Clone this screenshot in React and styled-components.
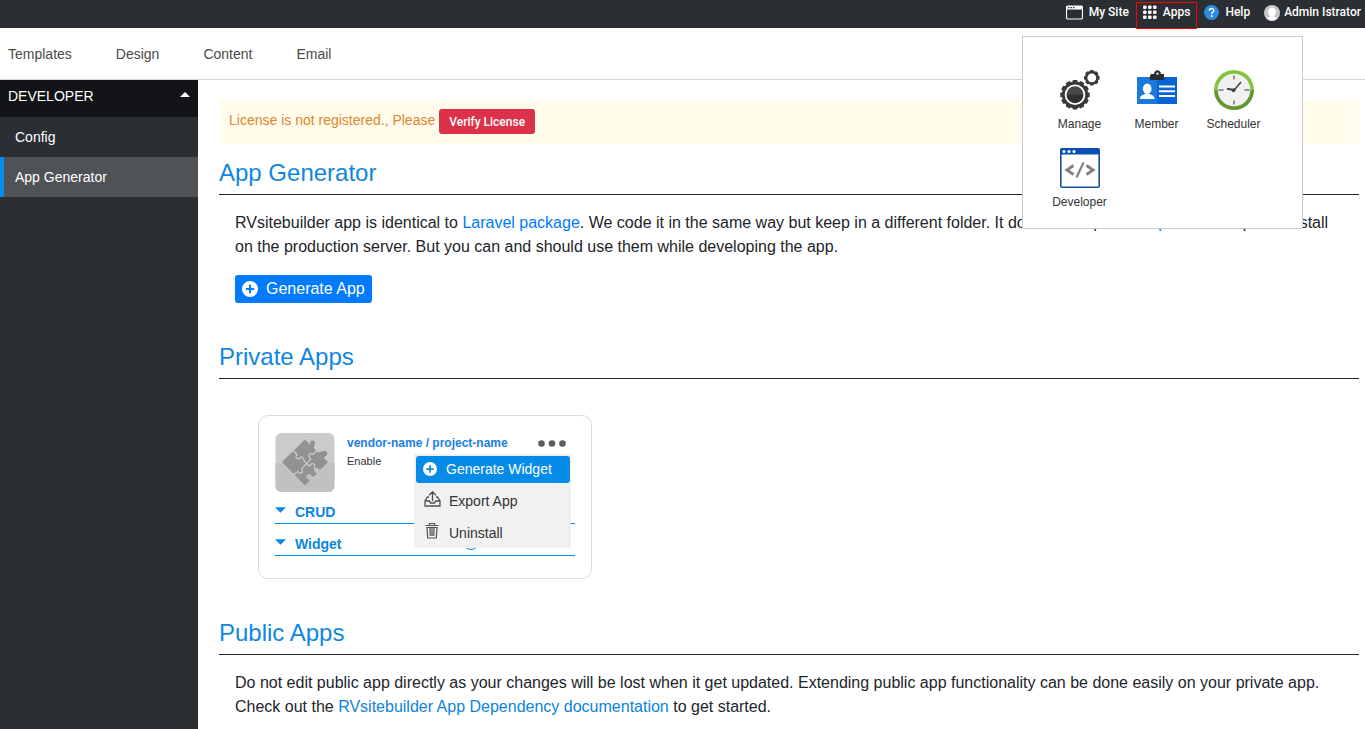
import React from "react";
import styled, { createGlobalStyle } from "styled-components";

const GlobalStyle = createGlobalStyle`
  *, *::before, *::after { box-sizing: border-box; }
  body {
    margin: 0;
    background: #fff;
    color: #212529;
    font: 16px/24px "Liberation Sans", Arial, sans-serif;
  }
  h2, p { margin: 0; padding: 0; }
  a { text-decoration: none; }
  button { font-family: inherit; cursor: pointer; border: 0; margin: 0; }
  svg { display: block; flex: none; }
`;

const Page = styled.div`
  display: flex;
  flex-direction: column;
  min-height: 100vh;
`;

const TopBar = styled.header`
  position: relative;
  display: flex;
  justify-content: flex-end;
  align-items: flex-start;
  height: 28px;
  background: #2b2e33;
`;

const TopItem = styled.button`
  display: flex;
  align-items: flex-start;
  gap: ${(p) => p.$gap || 6}px;
  height: 27px;
  margin-top: 2px;
  padding: 1px 6px;
  background: none;
  border: 1px solid ${(p) => (p.$active ? "#f00" : "transparent")};
  color: #fff;
  font: 500 12px/16px Roboto, sans-serif;
  white-space: nowrap;

  &:last-of-type { padding-right: 3px; }
`;

const AppsPanel = styled.div`
  position: absolute;
  z-index: 10;
  top: 36px;
  right: 62px;
  width: 281px;
  height: 193px;
  padding: 33px 18px 18px;
  background: #fff;
  border: 1px solid #ccc;
`;

const AppGrid = styled.div`
  display: grid;
  grid-template-columns: repeat(3, 77px);
  row-gap: 16px;
`;

const AppTile = styled.a`
  display: flex;
  flex-direction: column;
  align-items: center;
  gap: 6px;
  color: #333;
  font-size: 12px;
  line-height: 16px;
`;

const MainNav = styled.nav`
  display: flex;
  align-items: center;
  gap: 44px;
  height: 52px;
  padding: 0 8px;
  border-bottom: 1px solid #d5d5d5;
`;

const NavLink = styled.a`
  color: #4a4a4a;
  font-size: 14px;
  line-height: 20px;
`;

const Body = styled.div`
  display: flex;
  flex: 1;
`;

const Sidebar = styled.aside`
  flex: none;
  width: 198px;
  background: #2b2e33;
`;

const SideHeading = styled.button`
  display: flex;
  justify-content: space-between;
  align-items: flex-start;
  width: 100%;
  height: 37px;
  padding: 8px;
  background: #131417;
  color: #fff;
  font-size: 14px;
  line-height: 16px;
  svg { margin-top: 4px; }
`;

const SideLink = styled.a`
  display: block;
  padding: 10px 11px;
  border-left: 4px solid ${(p) => (p.$active ? "#078ee9" : "transparent")};
  background: ${(p) => (p.$active ? "#4f5256" : "transparent")};
  color: #fff;
  font-size: 14px;
  line-height: 20px;
`;

const Main = styled.main`
  flex: 1;
  min-width: 0;
  padding: 19px 6px 8px 21px;
`;

const Notice = styled.div`
  display: flex;
  align-items: flex-start;
  gap: 4px;
  padding: 10px;
  background: #fffceb;
  color: #e0862e;
  font-size: 14px;
  line-height: 22px;
`;

const VerifyButton = styled.button`
  height: 25px;
  padding: 0 10px;
  border-radius: 3px;
  background: #dc3149;
  color: #fff;
  font: 500 12px/16px Roboto, sans-serif;
`;

const SectionTitle = styled.h2`
  margin-top: ${(p) => (p.$first ? 15 : 40)}px;
  padding-bottom: 7px;
  border-bottom: 1px solid #212529;
  color: #0f87e0;
  font-size: 24px;
  font-weight: 400;
  line-height: 28px;
`;

const Paragraph = styled.p`
  padding: 16px 16px 0;
`;

const TextLink = styled.a`
  color: ${(p) => (p.$deep ? "#0c83dc" : "#007bff")};
`;

const GenerateButton = styled.button`
  display: flex;
  align-items: center;
  gap: 8px;
  height: 28px;
  margin: 16px 16px 0;
  padding: 0 7px;
  border-radius: 3px;
  background: #007bff;
  color: #fff;
  font-size: 16px;
  line-height: 24px;
`;

const AppCard = styled.article`
  position: relative;
  width: 334px;
  margin: 36px 39px 0;
  padding: 17px 16px 22px;
  border: 1px solid #dcdcdc;
  border-radius: 10px;
`;

const CardHead = styled.div`
  display: flex;
  gap: 12px;
`;

const CardInfo = styled.div`
  flex: 1;
  color: #333;
  font-size: 11px;
  line-height: 16px;
`;

const CardName = styled.a`
  display: block;
  color: #1a80e4;
  font-size: 12px;
  font-weight: 700;
  line-height: 20px;
`;

const MoreButton = styled.button`
  align-self: flex-start;
  padding: 7px 9px 0 0;
  background: none;
`;

const CardRow = styled.div`
  display: flex;
  align-items: flex-start;
  height: 32px;
  padding-top: 10px;
  border-bottom: 1px solid #0a87e2;
  color: #0a87e2;
  font-size: 14px;
  font-weight: 700;
  line-height: 20px;
`;

const RowToggle = styled.button`
  display: flex;
  align-items: center;
  gap: 9px;
  padding: 0;
  background: none;
  color: inherit;
  font: inherit;
  svg { margin-bottom: 4px; }
`;

const RowAction = styled.a`
  display: flex;
  align-items: center;
  gap: 5px;
  margin-left: auto;
  padding-right: 8px;
  color: #0a87e2;
  font-size: 11px;
  font-weight: 400;
  line-height: 16px;
`;

const CardMenu = styled.div`
  position: absolute;
  top: 38px;
  right: 20px;
  width: 157px;
  height: 94px;
  padding: 2px 1px 0 2px;
  background: #f1f1f1;
`;

const MenuItem = styled.button`
  display: flex;
  align-items: center;
  gap: ${(p) => (p.$primary ? 9 : 8)}px;
  width: 100%;
  height: ${(p) => (p.$primary ? 27 : 32)}px;
  margin-bottom: ${(p) => (p.$primary ? 2 : 0)}px;
  padding: 0 7px ${(p) => (p.$primary ? 1 : 0)}px 7px;
  border-radius: 3px;
  background: ${(p) => (p.$primary ? "#078be8" : "none")};
  color: ${(p) => (p.$primary ? "#fff" : "#333")};
  font-size: 14px;
  line-height: 20px;
  white-space: nowrap;
`;

function WindowIcon() {
  return (
    <svg width="17" height="16" viewBox="0 0 17 16" aria-hidden="true">
      <rect x="0.5" y="2" width="16" height="13" rx="1.5" fill="none" stroke="#fff" strokeWidth="1.2" />
      <path d="M0.5 3.500A1.500 1.500 0 0 1 2 2h13a1.500 1.500 0 0 1 1.500 1.500V5.500H.5z" fill="#fff" />
      <path d="M2 3.700h1.500M4.500 3.700H6M7 3.700h1.500" stroke="#2b2e33" strokeWidth="1.200" />
    </svg>
  );
}

function GridIcon() {
  const steps = [2, 7, 12];
  return (
    <svg width="14" height="16" viewBox="0 0 14 16" fill="#fff" aria-hidden="true">
      {steps.map((y) =>
        steps.map((x) => <rect key={`${x}-${y}`} x={x - 2} y={y - 0.5} width="3.6" height="3.6" rx="1.3" />)
      )}
    </svg>
  );
}

function HelpIcon() {
  return (
    <svg width="15" height="16" viewBox="0 0 15 16" aria-hidden="true">
      <circle cx="7.5" cy="8.5" r="7.5" fill="#2b8be0" />
      <path d="M5.4 6.7c0-2.9 4.4-2.8 4.4-.2 0 1.6-2.1 1.6-2.1 3.4" fill="none" stroke="#fff" strokeWidth="1.5" />
      <circle cx="7.7" cy="12" r="1" fill="#fff" />
    </svg>
  );
}

function AvatarIcon() {
  return (
    <svg width="16" height="17" viewBox="0 0 16 17" aria-hidden="true">
      <circle cx="8" cy="9" r="8" fill="#c9c9c9" />
      <ellipse cx="8" cy="8" rx="3.8" ry="4.6" fill="#fff" />
      <path d="M6.2 11h3.6v1.7l3.4 1.6c-2.8 3.3-7.6 3.3-10.4 0l3.4-1.6z" fill="#fff" />
    </svg>
  );
}

function Gear({ cx, cy, r, teeth, toothWidth, children }) {
  return (
    <g transform={`translate(${cx} ${cy})`}>
      {Array.from({ length: teeth }, (_, i) => (
        <rect
          key={i}
          x={-toothWidth / 2}
          y={-r}
          width={toothWidth}
          height={r * 0.5}
          rx="0.8"
          transform={`rotate(${(360 / teeth) * i})`}
        />
      ))}
      <circle r={r * 0.9} />
      {children}
    </g>
  );
}

function ManageIcon() {
  return (
    <svg width="40" height="40" viewBox="0 0 40 40" fill="#3a3a3a" aria-hidden="true">
      <defs>
        <linearGradient id="hub" x1="0" y1="0" x2="0" y2="1">
          <stop offset="0.45" stopColor="#484848" />
          <stop offset="0.55" stopColor="#303030" />
        </linearGradient>
      </defs>
      <Gear cx={15} cy={24.8} r={14.7} teeth={12} toothWidth={4.8}>
        <circle r="10.3" fill="#fff" />
        <circle r="8.5" fill="url(#hub)" />
      </Gear>
      <Gear cx={31.8} cy={7.8} r={7.8} teeth={8} toothWidth={3.8}>
        <circle r="4.4" fill="#fff" />
      </Gear>
    </svg>
  );
}

function MemberIcon() {
  return (
    <svg width="40" height="40" viewBox="0 0 40 40" aria-hidden="true">
      <path d="M0 7h40v27H0z" fill="#0664d8" />
      <path d="M0 7h20v27H0z" fill="#1b78dd" />
      <path d="M14 4h3c.5-5 6.500-5 7 0h3v6H13V6z" fill="#282d34" />
      <circle cx="20.500" cy="3.700" r="1.200" fill="#ddd" />
      <ellipse cx="10.200" cy="18.800" rx="4.300" ry="5.200" fill="#fff" />
      <path d="M3 29c0-3.600 3-4 5-5h4.500c2 1 5 1.400 5 5z" fill="#fff" />
      <path d="M22 16.500h16M22 21.300h16M22 26h16" stroke="#fff" strokeWidth="2" />
    </svg>
  );
}

function SchedulerIcon() {
  return (
    <svg width="40" height="40" viewBox="0 0 40 40" aria-hidden="true">
      <defs>
        <linearGradient id="rim" x1="0" y1="0" x2="0" y2="1">
          <stop offset="0.5" stopColor="#85c340" />
          <stop offset="0.5" stopColor="#649734" />
        </linearGradient>
      </defs>
      <circle cx="20" cy="20" r="20" fill="url(#rim)" />
      <circle cx="20" cy="20" r="16.300" fill="#f1f1f1" />
      <path d="M20 5.500v4M20 30.500v4M4.500 20h5M30.500 20h5" stroke="#92929c" strokeWidth="2" />
      <path d="M13 18.800l7 1.200" stroke="#493d38" strokeWidth="2" />
      <path d="M18.500 22l8.500-10" stroke="#493d38" strokeWidth="1.500" />
      <circle cx="20" cy="20" r="1.800" fill="#493d38" />
    </svg>
  );
}

function DeveloperIcon() {
  return (
    <svg width="40" height="40" viewBox="0 0 40 40" aria-hidden="true">
      <rect x="0.800" y="0.800" width="38.400" height="38.400" rx="1.500" fill="#fff" stroke="#174e9c" strokeWidth="1.600" />
      <path d="M1.500 0h37L40 2v4.500H0V2z" fill="#0b4eb5" />
      <circle cx="4" cy="3.500" r="1.500" fill="#fff" />
      <circle cx="9" cy="3.500" r="1.500" fill="#fff" />
      <circle cx="14" cy="3.500" r="1.500" fill="#fff" />
      <g fill="none" stroke="#828282" strokeWidth="3">
        <path d="M13.500 17.500L7 22l6.500 4.500M26.500 17.500L33 22l-6.500 4.500" />
        <path d="M23.500 14.500l-7 15" strokeWidth="2.200" />
      </g>
    </svg>
  );
}

function PlusCircle({ size, mark }) {
  return (
    <svg width={size} height={size} viewBox="0 0 16 16" aria-hidden="true">
      <circle cx="8" cy="8" r="8" fill="#fff" />
      <path d="M8 3.800v8.400M3.800 8h8.400" stroke={mark} strokeWidth="2" />
    </svg>
  );
}

function PlusOutline() {
  return (
    <svg width="16" height="16" viewBox="0 0 16 16" fill="none" stroke="#0a87e2" aria-hidden="true">
      <circle cx="8" cy="8" r="7.500" />
      <path d="M8 4.500v7M4.500 8h7" />
    </svg>
  );
}

function PuzzleIcon() {
  return (
    <svg width="60" height="59" viewBox="0 0 60 59" aria-hidden="true">
      <rect width="59" height="59" rx="6" x="0.500" fill="#cbcbcb" />
      <path d="M.5 38h59v15a6 6 0 0 1-6 6h-47a6 6 0 0 1-6-6z" fill="#c1c1c1" />
      <path d="M.5 30h59v9H.5z" fill="#c1c1c1" />
      <g fill="#929292">
        <path d="M30 6.500l23 22.500-23 23.500L7 29z" />
        <circle cx="37.500" cy="10" r="2.400" />
        <path d="M35 14l1.500-4 3 1.500-1 5z" />
        <circle cx="49.500" cy="20.500" r="2.700" />
        <path d="M43 20l4.500-2 3 4-2 4z" />
      </g>
      <g fill="#c1c1c1">
        <circle cx="42" cy="37.500" r="2.600" />
        <path d="M43 39l3.500-3.500L50 34l-5 7z" />
        <circle cx="34" cy="43.500" r="2.600" />
        <path d="M33.500 45l3-2.500 4 3L35 49z" />
      </g>
      <g fill="none" stroke="#d2d2d2" strokeWidth="1.100">
        <path d="M18.500 18l3 3c.9.900 0 1.500-.4 2.300-.9 2.300 3 3.600 4.300 1.300.4-1 1.200-1 1.900-.2L30 29l3.500 3.500c.8.900 1.700.3 2-.5.800-2.500 4.800-1.400 4 1.300-.3.900-.8 1.500 0 2.300l2 2" />
        <path d="M42 17.500L38.500 21c-.9.900-1.500.1-2.300-.3-2.300-.8-3.500 3-1.300 4.200 1 .4 1 1.200.3 1.900L30 32l-3 3.500c-.8.800-.3 1.500.3 2.200 1.200 2.300-2.500 3.700-3.500 1.500-.5-1-1.200-.8-1.900-.1L19 41.500" />
      </g>
    </svg>
  );
}

function MoreIcon() {
  return (
    <svg width="28" height="7" viewBox="0 0 28 7" fill="#5d5d5d" aria-hidden="true">
      <circle cx="3.500" cy="3.500" r="3.300" />
      <circle cx="14" cy="3.500" r="3.300" />
      <circle cx="24.500" cy="3.500" r="3.300" />
    </svg>
  );
}

function ExportIcon() {
  return (
    <svg width="18" height="20" viewBox="0 0 18 20" fill="none" stroke="#505050" strokeWidth="1.300" aria-hidden="true">
      <path d="M9.500 10V.8M6 4.300L9.500.8 13 4.300M6 6H4.500L2 10v5h15v-5l-2.500-4H13M2 10h4.500l1 2h4l1-2H17" />
    </svg>
  );
}

function TrashIcon() {
  return (
    <svg width="18" height="20" viewBox="0 0 18 20" fill="none" stroke="#505050" strokeWidth="1.200" aria-hidden="true">
      <path d="M2.500 2.500h13M6.500 2V.5h5V2M4 4.500l.7 10.500h8.600l.7-10.500zM7 5l.3 8M9 5v8M11 5l-.3 8" />
    </svg>
  );
}

function Caret({ up, color }) {
  return (
    <svg width={up ? 10 : 11} height={up ? 5 : 6} viewBox="0 0 10 5" fill={color} aria-hidden="true">
      <path d={up ? "M0 5l5-5 5 5z" : "M0 0h10L5 5z"} />
    </svg>
  );
}

const tiles = [
  ["Manage", ManageIcon],
  ["Member", MemberIcon],
  ["Scheduler", SchedulerIcon],
  ["Developer", DeveloperIcon],
];

export default function App() {
  return (
    <Page>
      <GlobalStyle />
      <TopBar>
        <TopItem><WindowIcon />My Site</TopItem>
        <TopItem $active aria-expanded="true"><GridIcon />Apps</TopItem>
        <TopItem><HelpIcon />Help</TopItem>
        <TopItem $gap={4}><AvatarIcon />Admin Istrator</TopItem>
        <AppsPanel>
          <AppGrid>
            {tiles.map(([label, Icon]) => (
              <AppTile href="#" key={label}><Icon />{label}</AppTile>
            ))}
          </AppGrid>
        </AppsPanel>
      </TopBar>

      <MainNav>
        {["Templates", "Design", "Content", "Email"].map((label) => (
          <NavLink href="#" key={label}>{label}</NavLink>
        ))}
      </MainNav>

      <Body>
        <Sidebar>
          <SideHeading>DEVELOPER<Caret up color="#fff" /></SideHeading>
          <SideLink href="#">Config</SideLink>
          <SideLink href="#" $active>App Generator</SideLink>
        </Sidebar>

        <Main>
          <Notice>
            <span>License is not registered., Please</span>
            <VerifyButton>Verify License</VerifyButton>
          </Notice>

          <SectionTitle $first>App Generator</SectionTitle>
          <Paragraph>
            RVsitebuilder app is identical to <TextLink href="#">Laravel package</TextLink>. We code it in the
            same way but keep in a different folder. It does not require <TextLink href="#">composer</TextLink> and
            npm to install on the production server. But you can and should use them while developing the app.
          </Paragraph>
          <GenerateButton><PlusCircle size={16} mark="#007bff" />Generate App</GenerateButton>

          <SectionTitle>Private Apps</SectionTitle>
          <AppCard>
            <CardHead>
              <PuzzleIcon />
              <CardInfo>
                <CardName href="#">vendor-name / project-name</CardName>
                Enable
              </CardInfo>
              <MoreButton aria-label="More actions"><MoreIcon /></MoreButton>
            </CardHead>
            <CardRow>
              <RowToggle><Caret color="#0a87e2" />CRUD</RowToggle>
              <RowAction href="#"><PlusOutline />Generate CRUD</RowAction>
            </CardRow>
            <CardRow>
              <RowToggle><Caret color="#0a87e2" />Widget</RowToggle>
              <RowAction href="#"><PlusOutline />Generate Widget</RowAction>
            </CardRow>
            <CardMenu>
              <MenuItem $primary><PlusCircle size={14} mark="#078be8" />Generate Widget</MenuItem>
              <MenuItem><ExportIcon />Export App</MenuItem>
              <MenuItem><TrashIcon />Uninstall</MenuItem>
            </CardMenu>
          </AppCard>

          <SectionTitle>Public Apps</SectionTitle>
          <Paragraph>
            Do not edit public app directly as your changes will be lost when it get updated. Extending public app
            functionality can be done easily on your private app. Check out
            the <TextLink href="#" $deep>RVsitebuilder App Dependency documentation</TextLink> to get started.
          </Paragraph>
        </Main>
      </Body>
    </Page>
  );
}
